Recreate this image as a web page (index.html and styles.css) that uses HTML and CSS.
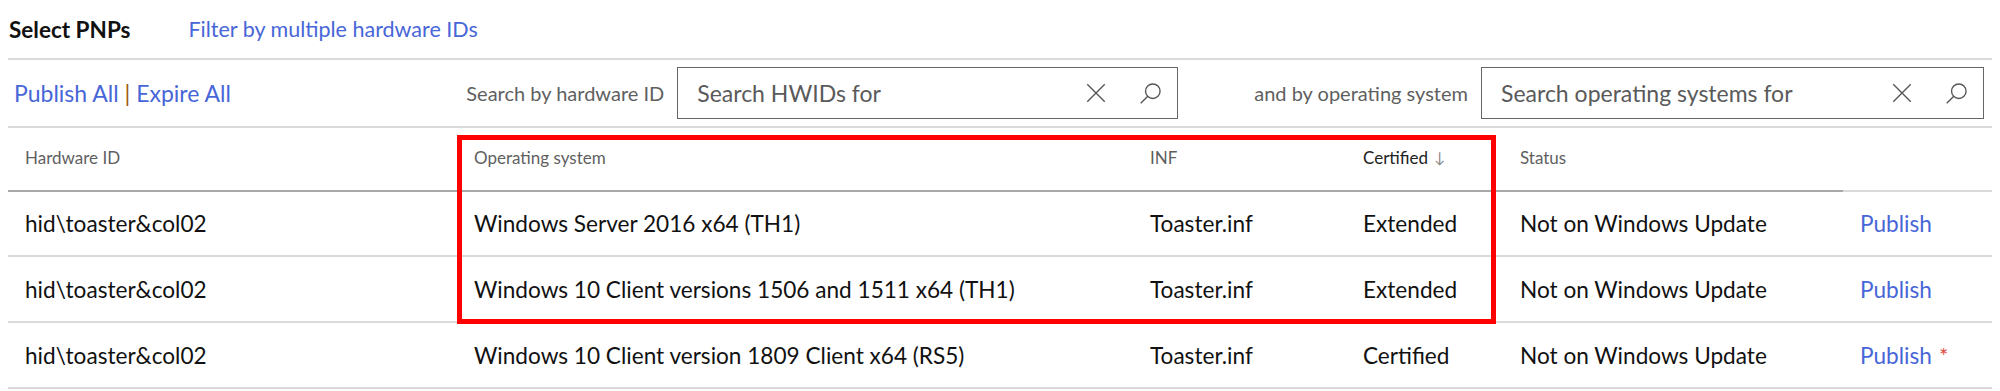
FILE: index.html
```html
<!DOCTYPE html>
<html lang="en">
<head>
    <meta charset="UTF-8">
    <title>Select PNPs</title>
    <link rel="stylesheet" href="styles.css">
</head>
<body>
    <div class="page">
        <div class="top">
            <span class="title">Select PNPs</span>
            <a href="#" class="link filter-link">Filter by multiple hardware IDs</a>
        </div>

        <div class="toolbar">
            <div class="bulk">
                <a href="#" class="link">Publish All</a>
                <span class="pipe">|</span>
                <a href="#" class="link">Expire All</a>
            </div>
            <div class="filters">
                <div class="search-group">
                    <label class="search-label">Search by hardware ID</label>
                    <div class="search-box box-hwid">
                        <span class="placeholder">Search HWIDs for</span>
                        <svg class="icon-clear" viewBox="0 0 16 16"><path d="M1 1 L15 15 M15 1 L1 15"/></svg>
                        <svg class="icon-search" viewBox="0 0 20 20"><circle cx="12" cy="8" r="6.3"/><path d="M7.6 12.4 L1.5 18.5"/></svg>
                    </div>
                </div>
                <div class="search-group">
                    <label class="search-label">and by operating system</label>
                    <div class="search-box box-os">
                        <span class="placeholder">Search operating systems for</span>
                        <svg class="icon-clear" viewBox="0 0 16 16"><path d="M1 1 L15 15 M15 1 L1 15"/></svg>
                        <svg class="icon-search" viewBox="0 0 20 20"><circle cx="12" cy="8" r="6.3"/><path d="M7.6 12.4 L1.5 18.5"/></svg>
                    </div>
                </div>
            </div>
        </div>

        <div class="grid-wrap">
            <div class="grid">
                <div class="row head">
                    <div class="cell">Hardware ID</div>
                    <div class="cell">Operating system</div>
                    <div class="cell">INF</div>
                    <div class="cell sorted">Certified <span class="arrow">&#8595;</span></div>
                    <div class="cell">Status</div>
                    <div class="cell action"></div>
                </div>
                <div class="row first">
                    <div class="cell">hid\toaster&amp;col02</div>
                    <div class="cell">Windows Server 2016 x64 (TH1)</div>
                    <div class="cell">Toaster.inf</div>
                    <div class="cell">Extended</div>
                    <div class="cell">Not on Windows Update</div>
                    <div class="cell action"><a href="#" class="link">Publish</a></div>
                </div>
                <div class="row">
                    <div class="cell">hid\toaster&amp;col02</div>
                    <div class="cell">Windows 10 Client versions 1506 and 1511 x64 (TH1)</div>
                    <div class="cell">Toaster.inf</div>
                    <div class="cell">Extended</div>
                    <div class="cell">Not on Windows Update</div>
                    <div class="cell action"><a href="#" class="link">Publish</a></div>
                </div>
                <div class="row">
                    <div class="cell">hid\toaster&amp;col02</div>
                    <div class="cell">Windows 10 Client version 1809 Client x64 (RS5)</div>
                    <div class="cell">Toaster.inf</div>
                    <div class="cell">Certified</div>
                    <div class="cell">Not on Windows Update</div>
                    <div class="cell action"><a href="#" class="link">Publish</a><span class="required">*</span></div>
                </div>
            </div>
            <!-- highlight drawn over the table -->
            <div class="highlight"></div>
        </div>
    </div>
</body>
</html>
```

FILE: styles.css
```css
:root {
    --link: #4766d8;
    --text: #111;
    --muted: #5f5f5f;
    --line: #dadada;
    --line-dark: #a8a8a8;
}

body {
    margin: 0;
    font-family: 'Lato', 'Segoe UI', sans-serif;
    color: var(--text);
    background: #fff;
}

.page {
    padding: 0 8px;
}

.link {
    color: var(--link);
    text-decoration: none;
}

/* top line */
.top {
    height: 58px;
    display: flex;
    align-items: center;
    gap: 58px;
    border-bottom: 2px solid var(--line);
}

.title {
    font-size: 22.5px;
    font-weight: 700;
    padding-left: 1px;
}

.filter-link {
    font-size: 21.5px;
}

/* toolbar */
.toolbar {
    height: 66px;
    display: flex;
    align-items: center;
    border-bottom: 2px solid var(--line);
}

.bulk {
    padding-left: 6px;
    font-size: 23px;
}

.pipe {
    color: #9a5a12;
}

.filters {
    margin-left: auto;
    display: flex;
    align-items: center;
    gap: 76px;
    padding-right: 8px;
}

.search-group {
    display: flex;
    align-items: center;
    gap: 13px;
}

.search-label {
    font-size: 20px;
    color: var(--muted);
}

.search-box {
    height: 52px;
    box-sizing: border-box;
    border: 1.5px solid #666;
    display: flex;
    align-items: center;
    padding: 0 15px 0 19px;
}

.box-hwid {
    width: 501px;
}

.box-os {
    width: 503px;
}

.placeholder {
    flex: 1;
    font-size: 23px;
    color: #5a5a5a;
}

.icon-clear {
    width: 20px;
    height: 20px;
    fill: none;
    stroke: #555;
    stroke-width: 1.1;
}

.icon-search {
    width: 23px;
    height: 23px;
    margin-left: 33px;
    fill: none;
    stroke: #555;
    stroke-width: 1.2;
}

/* table */
.grid-wrap {
    position: relative;
}

.row {
    display: grid;
    grid-template-columns: 449px 676px 213px 157px 340px 1fr;
    height: 66px;
    box-sizing: border-box;
    border-bottom: 2px solid var(--line);
    font-size: 22.6px;
}

.row.first {
    height: 65px;
}

.row.head {
    height: 64px;
    font-size: 17px;
    color: var(--muted);
    border-bottom: none;
}

.cell {
    display: flex;
    align-items: center;
    padding-left: 17px;
    white-space: nowrap;
}

.row.head .cell {
    border-bottom: 2px solid var(--line-dark);
    padding-bottom: 4px;
}

.row.head .cell.action {
    border-bottom-color: var(--line);
}

.sorted {
    color: #222;
    gap: 6px;
}

.arrow {
    color: #888;
    font-size: 15px;
}

.required {
    color: #e0463c;
    margin-left: 7px;
    font-size: 22px;
}

.highlight {
    position: absolute;
    left: 449px;
    top: 7px;
    width: 1039px;
    height: 189px;
    box-sizing: border-box;
    border: 5px solid #ff0000;
    pointer-events: none;
}
```
